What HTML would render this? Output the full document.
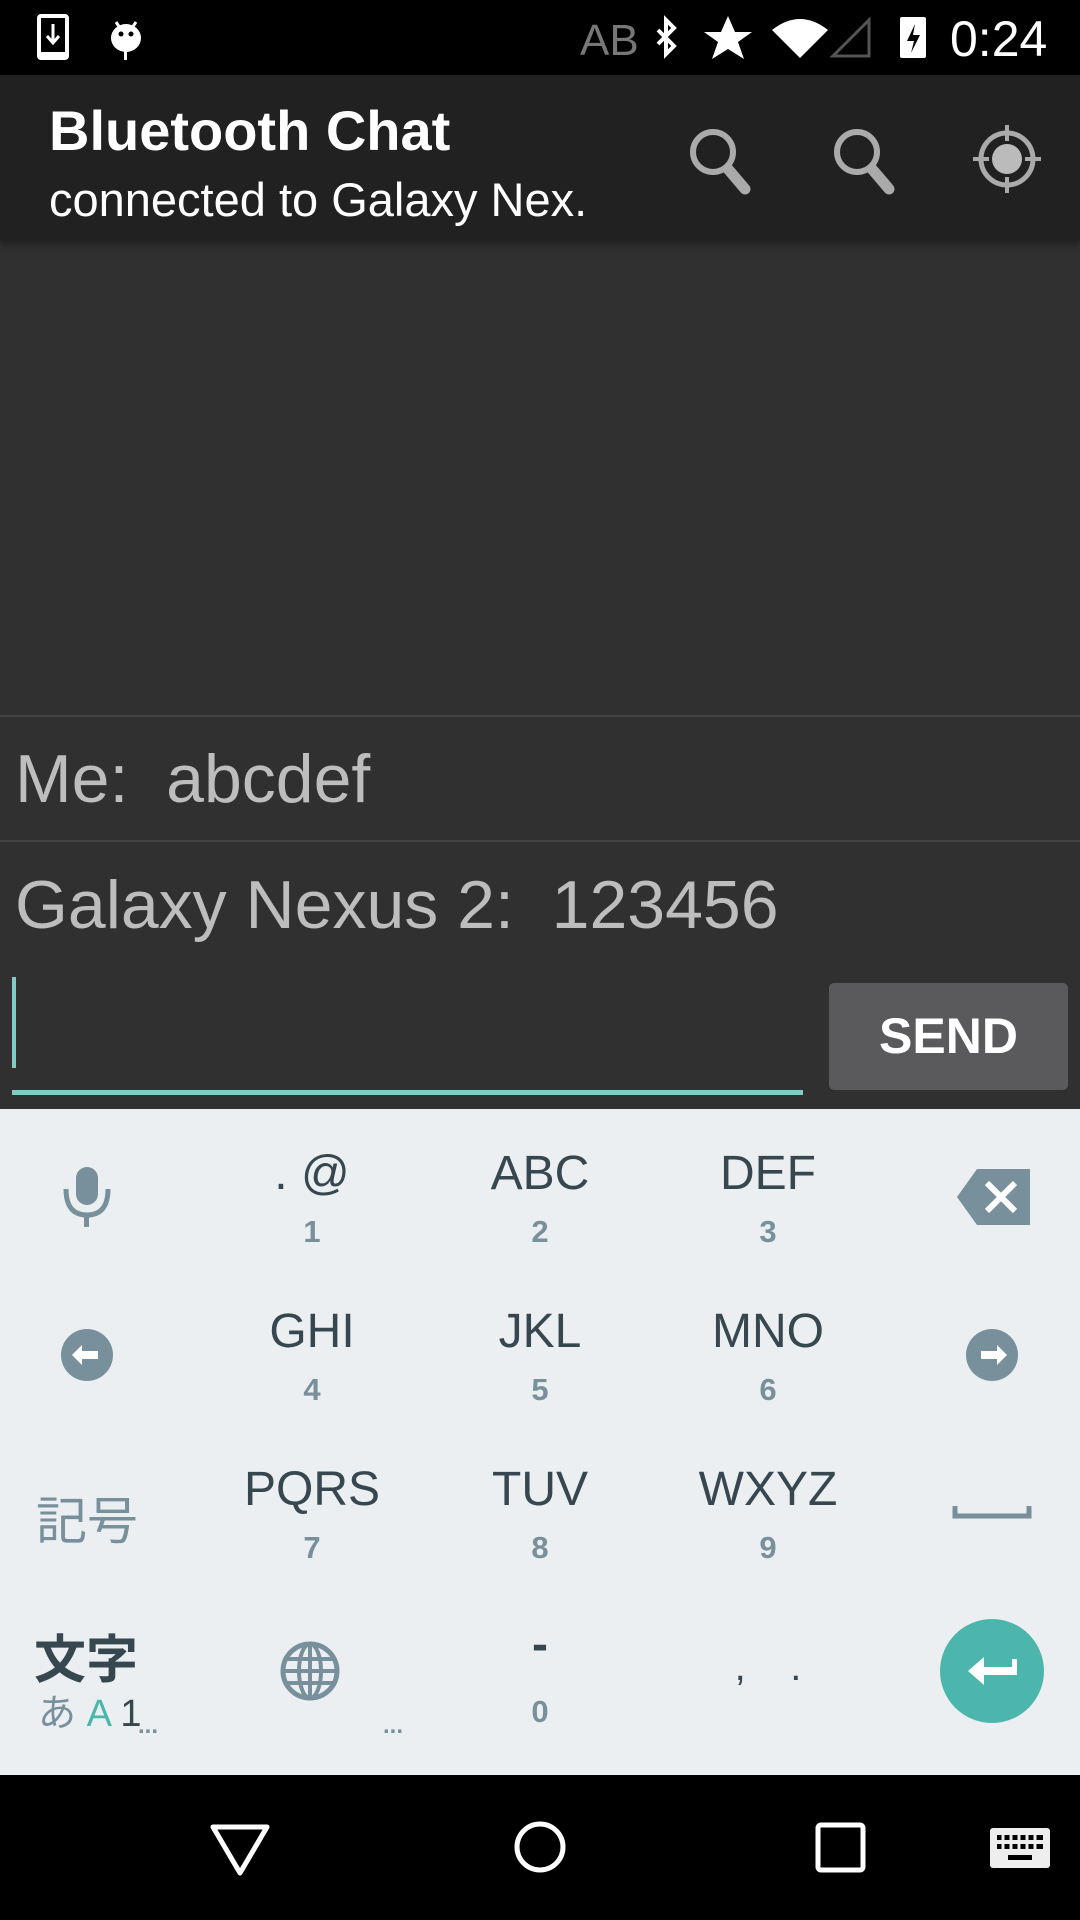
<!DOCTYPE html>
<html><head><meta charset="utf-8"><style>
*{margin:0;padding:0;box-sizing:border-box}
body{width:1080px;height:1920px;overflow:hidden;background:#303030;font-family:"Liberation Sans","Noto Sans CJK JP",sans-serif;position:relative}
.a{position:absolute}
.sb{left:0;top:0;width:1080px;height:75px;background:#000}
.ab{left:0;top:75px;width:1080px;height:166px;background:#212121;box-shadow:0 4px 6px rgba(0,0,0,.3)}
.kb{left:0;top:1109px;width:1080px;height:666px;background:#eceff1}
.nav{left:0;top:1775px;width:1080px;height:145px;background:#000}
.k{position:absolute;width:200px;text-align:center;color:#37474f;font-size:48px;transform:translateX(-100px)}
.n{position:absolute;width:100px;text-align:center;color:#78909c;font-size:31px;font-weight:bold;transform:translateX(-50px)}
.div{left:0;width:1080px;height:2px;background:#444}
</style></head><body>
<div class="a sb"></div>
<svg class="a" style="left:0;top:0" width="1080" height="75">
<rect x="39" y="16" width="28" height="42" rx="2" fill="none" stroke="#fff" stroke-width="4"/>
<rect x="39" y="52" width="28" height="6" fill="#fff"/>
<path d="M53 24v18M47 36l6 7 6-7" stroke="#fff" stroke-width="3" fill="none"/>
<ellipse cx="126" cy="38" rx="15" ry="14" fill="#fff"/><rect x="124" y="48" width="3" height="12" fill="#fff"/>
<path d="M116 22l4 6M136 22l-4 6" stroke="#fff" stroke-width="3"/>
<circle cx="121" cy="34" r="2.5" fill="#000"/><circle cx="131" cy="34" r="2.5" fill="#000"/>
<text x="580" y="55" font-family="Liberation Sans" font-size="44" fill="#777">AB</text>
<path d="M658 30l16 16-8 8V20l8 8-16 16" stroke="#fff" stroke-width="4" fill="none"/>
<path d="M728 16l7 16h17l-14 10 6 17-16-10-16 10 6-17-14-10h17z" fill="#fff"/>
<path d="M772 30q28-22 56 0l-28 28z" fill="#fff"/>
<path d="M833 56h36V20z" fill="none" stroke="#555" stroke-width="3"/>
<rect x="900" y="17" width="26" height="41" rx="2" fill="#fff"/>
<path d="M915 24l-8 17h7l-3 12 9-18h-7z" fill="#000"/>
<text x="950" y="56" font-family="Liberation Sans" font-size="50" fill="#fff">0:24</text>
</svg>
<div class="a ab"></div>
<div class="a" style="left:49px;top:98px;font-size:56px;font-weight:bold;color:#fff">Bluetooth Chat</div>
<div class="a" style="left:49px;top:172px;font-size:47px;color:#fff">connected to Galaxy Nex.</div>
<svg class="a" style="left:0;top:75px" width="1080" height="166">
<g stroke="#aaa" fill="none"><circle cx="713" cy="77" r="20" stroke-width="6"/><path d="M728 94l17 20" stroke-width="11" stroke-linecap="round"/></g>
<g stroke="#aaa" fill="none"><circle cx="857" cy="77" r="20" stroke-width="6"/><path d="M872 94l17 20" stroke-width="11" stroke-linecap="round"/></g>
<circle cx="1007" cy="84" r="26" fill="none" stroke="#aaa" stroke-width="5"/>
<circle cx="1007" cy="84" r="15" fill="#bbb"/>
<path d="M1007 50v16M1007 102v16M973 84h16M1025 84h16" stroke="#aaa" stroke-width="4"/>
</svg>
<div class="a div" style="top:715px"></div>
<div class="a div" style="top:840px"></div>
<div class="a" style="left:15px;top:740px;font-size:68px;color:#bdbdbd;white-space:pre">Me:  abcdef</div>
<div class="a" style="left:15px;top:866px;font-size:68px;color:#bdbdbd;white-space:pre">Galaxy Nexus 2:  123456</div>
<div class="a" style="left:12px;top:977px;width:4px;height:91px;background:#80cbc4"></div>
<div class="a" style="left:12px;top:1090px;width:791px;height:5px;background:#80cbc4"></div>
<div class="a" style="left:829px;top:983px;width:239px;height:107px;background:#5a5a5c;border-radius:5px;color:#fff;font-size:50px;font-weight:bold;text-align:center;line-height:107px">SEND</div>
<div class="a kb"></div>
<div class="k" style="left:312px;top:1146px">. @</div><div class="n" style="left:312px;top:1214px">1</div>
<div class="k" style="left:540px;top:1146px">ABC</div><div class="n" style="left:540px;top:1214px">2</div>
<div class="k" style="left:768px;top:1146px">DEF</div><div class="n" style="left:768px;top:1214px">3</div>
<div class="k" style="left:312px;top:1304px">GHI</div><div class="n" style="left:312px;top:1372px">4</div>
<div class="k" style="left:540px;top:1304px">JKL</div><div class="n" style="left:540px;top:1372px">5</div>
<div class="k" style="left:768px;top:1304px">MNO</div><div class="n" style="left:768px;top:1372px">6</div>
<div class="k" style="left:312px;top:1462px">PQRS</div><div class="n" style="left:312px;top:1530px">7</div>
<div class="k" style="left:540px;top:1462px">TUV</div><div class="n" style="left:540px;top:1530px">8</div>
<div class="k" style="left:768px;top:1462px">WXYZ</div><div class="n" style="left:768px;top:1530px">9</div>
<div class="k" style="left:540px;top:1617px;font-weight:bold">-</div><div class="n" style="left:540px;top:1694px">0</div>
<div class="k" style="left:768px;top:1645px;font-size:40px;white-space:pre">,    .</div>
<div class="a" style="left:36px;top:1480px;font-size:51px;color:#78909c">記号</div>
<div class="a" style="left:34px;top:1618px;font-size:52px;color:#37474f;font-weight:bold">文字</div>
<div class="a" style="left:38px;top:1682px;font-size:38px;color:#78909c">あ<span style="color:#4db6ac"> A</span><span style="color:#37474f"> 1</span></div>
<div class="a" style="left:138px;top:1712px;font-size:24px;color:#78909c;font-weight:bold">...</div>
<div class="a" style="left:383px;top:1712px;font-size:24px;color:#78909c;font-weight:bold">...</div>
<svg class="a" style="left:0;top:1109px" width="1080" height="666">
<g fill="#78909c">
<rect x="76" y="58" width="22" height="38" rx="11"/>
<path d="M66 80q0 26 21 26t21-26" stroke="#78909c" stroke-width="5" fill="none"/><rect x="84" y="104" width="5" height="14"/>
<path d="M957 88l20-28h53v56h-53z"/>
<circle cx="87" cy="246" r="26"/><circle cx="992" cy="246" r="26"/>
<circle cx="310" cy="562" r="27" fill="none" stroke="#78909c" stroke-width="5"/>
</g>
<path d="M987 74l28 28M1015 74l-28 28" stroke="#fff" stroke-width="6"/>
<path d="M72 246l10-10v6h16v8h-16v6z" fill="#fff"/><path d="M1007 246l-10-10v6h-16v8h16v6z" fill="#fff"/>
<path d="M955 397v10h74v-10" stroke="#78909c" stroke-width="5" fill="none"/>
<g stroke="#78909c" stroke-width="4" fill="none"><ellipse cx="310" cy="562" rx="11" ry="27"/><path d="M284 562h52M287 550h46M287 574h46M310 535v54"/></g>
<circle cx="992" cy="562" r="52" fill="#4db6ac"/>
<path d="M968 562l16-14v10h28v-8h5v16h-33v10z" fill="#fff"/>
</svg>
<div class="a nav"></div>
<svg class="a" style="left:0;top:1775px" width="1080" height="145">
<path d="M213 52h54l-27 46z" fill="none" stroke="#fff" stroke-width="5" stroke-linejoin="round"/>
<circle cx="540" cy="72" r="23" fill="none" stroke="#fff" stroke-width="5"/>
<rect x="818" y="50" width="45" height="45" rx="3" fill="none" stroke="#fff" stroke-width="5"/>
<rect x="990" y="53" width="60" height="40" rx="3" fill="#eee"/>
<g fill="#000"><rect x="997" y="60" width="46" height="5"/><rect x="997" y="69" width="46" height="5"/><rect x="1008" y="80" width="24" height="5"/></g>
<path d="M1003 60v14M1011 60v14M1019 60v14M1027 60v14M1035 60v14" stroke="#eee" stroke-width="3"/>
</svg>
</body></html>
